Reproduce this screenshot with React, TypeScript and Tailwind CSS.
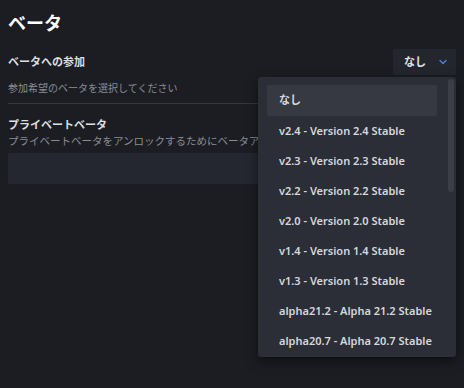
const options = [
  'なし',
  'v2.4 - Version 2.4 Stable',
  'v2.3 - Version 2.3 Stable',
  'v2.2 - Version 2.2 Stable',
  'v2.0 - Version 2.0 Stable',
  'v1.4 - Version 1.4 Stable',
  'v1.3 - Version 1.3 Stable',
  'alpha21.2 - Alpha 21.2 Stable',
  'alpha20.7 - Alpha 20.7 Stable',
]

export default function App() {
  return (
    <div
      className="relative w-[464px] h-[388px] overflow-hidden bg-[#1b1d23] px-2 text-[#dfe1e4]"
      style={{ fontFamily: '"Noto Sans", "Noto Sans CJK JP", sans-serif' }}
    >
      {/* タイトル */}
      <div className="pt-[9px] text-[18px] font-bold leading-[28px] text-white">ベータ</div>

      {/* ベータへの参加 */}
      <div className="mt-[12px] flex items-center justify-between">
        <div className="text-[11px] font-semibold leading-[16px] text-[#dcdee1]">ベータへの参加</div>
        <button className="flex h-[26px] w-[63px] items-center gap-[12px] rounded-[2px] bg-[#23262d] pl-[11px] text-[11px] font-semibold text-[#e4e6e9]">
          なし
          <svg width="10" height="10" viewBox="0 0 10 10" fill="none">
            <path d="M2 3.5 L5 6.5 L8 3.5" stroke="#4f7fd6" strokeWidth="1.4" strokeLinecap="round" strokeLinejoin="round" />
          </svg>
        </button>
      </div>
      <div className="mt-[5px] text-[10px] leading-[16px] text-[#8a8d93]">参加希望のベータを選択してください</div>
      <div className="mt-[7px] h-px bg-[#34373e]" />

      {/* プライベートベータ */}
      <div className="mt-[13px] text-[11px] font-semibold leading-[16px] text-[#dcdee1]">プライベートベータ</div>
      <div className="w-[250px] overflow-hidden text-[10.5px] leading-[16px] text-[#8a8d93] whitespace-nowrap">
        プライベートベータをアンロックするためにベータアクセスコード
      </div>
      <div className="mt-[4px] h-[31px] rounded-[2px] bg-[#24272f]" />

      {/* ドロップダウン */}
      <div className="absolute left-[258px] top-[77px] h-[280px] w-[198px] overflow-hidden rounded-[3px] bg-[#2b2e36] shadow-[0_4px_12px_rgba(0,0,0,0.5)]">
        <div className="flex flex-col px-[9px] pt-[8px]">
          {options.map((o, i) => (
            <div
              key={o}
              className={
                'flex h-[30px] w-[170px] shrink-0 items-center pl-[12px] text-[11px] font-semibold whitespace-nowrap text-[#d6d8dc] ' +
                (i === 0 ? 'h-[31px] rounded-[2px] bg-[#363941]' : '')
              }
            >
              {o}
            </div>
          ))}
        </div>
        <div className="absolute right-[2px] top-[2px] h-[113px] w-[6px] rounded-[3px] bg-[#3b3e47]" />
      </div>
    </div>
  )
}
